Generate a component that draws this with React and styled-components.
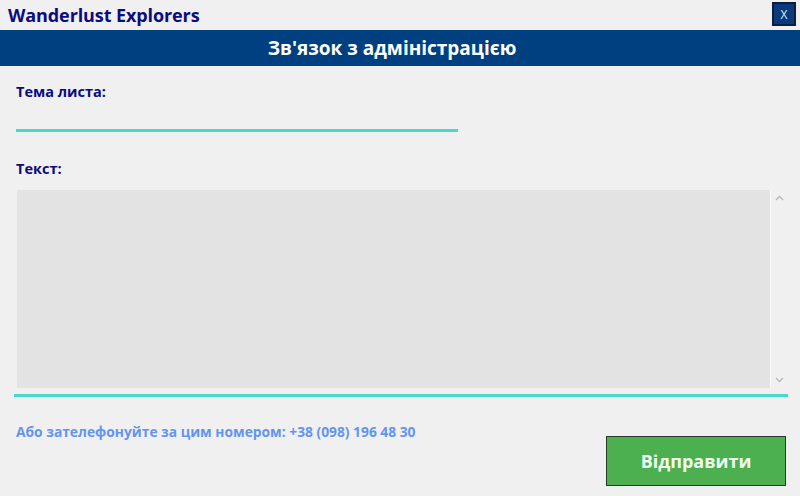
import React from "react";
import styled, { createGlobalStyle } from "styled-components";

const Global = createGlobalStyle`
  html, body { margin: 0; padding: 0; background: #f0f0f0; }
  body { font-family: "Open Sans", "Noto Sans", sans-serif; }
  * { box-sizing: border-box; }
`;

const Window = styled.div`
  width: 800px;
  height: 496px;
  background: #f0f0f0;
  display: flex;
  flex-direction: column;
  overflow: hidden;
`;

const TitleBar = styled.div`
  height: 30px;
  display: flex;
  align-items: flex-start;
  justify-content: space-between;
  padding: 2px 4px 0 8px;
`;

const AppTitle = styled.div`
  font-size: 18px;
  font-weight: 700;
  color: #0b0b80;
  line-height: 26px;
  letter-spacing: -0.1px;
`;

const CloseButton = styled.button`
  width: 24px;
  height: 24px;
  background: #0a3a7c;
  border: 2px solid #0c1e3a;
  color: #dfe8f5;
  font-family: "Open Sans", sans-serif;
  font-size: 12px;
  padding: 0;
  display: flex;
  align-items: center;
  justify-content: center;
`;

const Header = styled.div`
  height: 36px;
  background: #003f80;
  color: #ffffff;
  font-size: 19px;
  font-weight: 700;
  display: flex;
  align-items: center;
  justify-content: center;
  padding-right: 16px;
`;

const Form = styled.div`
  display: flex;
  flex-direction: column;
  padding: 0 12px 0 16px;
  flex: 1;
`;

const Label = styled.div`
  font-size: 14.5px;
  font-weight: 700;
  color: #0b0b80;
  line-height: 20px;
  margin-top: ${(p) => p.$top}px;
`;

const SubjectInput = styled.div`
  width: 442px;
  height: 3px;
  background: #4ad8ca;
  margin-top: ${(p) => p.$top}px;
`;

const TextBox = styled.div`
  margin-top: 11px;
  margin-left: 1px;
  height: 198px;
  display: flex;
`;

const TextArea = styled.div`
  flex: 0 0 753px;
  background: #e3e3e3;
`;

const ScrollBar = styled.div`
  width: 17px;
  border-left: 1px solid #fafafa;
  display: flex;
  flex-direction: column;
  justify-content: space-between;
  align-items: center;
  padding: 5px 0 5px;
`;

const Arrow = styled.svg`
  width: 9px;
  height: 6px;
`;

const BottomLine = styled.div`
  height: 3px;
  margin-top: 6px;
  margin-left: -2px;
  width: 774px;
  background: #4ad8ca;
`;

const Footer = styled.div`
  display: flex;
  justify-content: space-between;
  align-items: flex-start;
  margin-top: 25px;
`;

const Phone = styled.div`
  font-size: 13.8px;
  font-weight: 700;
  color: #6495ed;
  line-height: 20px;
`;

const SendButton = styled.button`
  width: 180px;
  height: 50px;
  margin-top: 14px;
  margin-right: 2px;
  background: #4caf50;
  border: 1px solid #2a3a2a;
  color: #f0fff0;
  font-family: "Open Sans", sans-serif;
  font-size: 18px;
  font-weight: 700;
`;

export default function App() {
  return (
    <Window>
      <Global />
      <TitleBar>
        <AppTitle>Wanderlust Explorers</AppTitle>
        <CloseButton>X</CloseButton>
      </TitleBar>
      <Header>Зв'язок з адміністрацією</Header>
      <Form>
        <Label $top={16}>Тема листа:</Label>
        <SubjectInput $top={27} />
        <Label $top={27}>Текст:</Label>
        <TextBox>
          <TextArea />
          <ScrollBar>
            <Arrow viewBox="0 0 9 6">
              <path d="M1 5 L4.5 1.5 L8 5" stroke="#b8b8b8" strokeWidth="1.4" fill="none" />
            </Arrow>
            <Arrow viewBox="0 0 9 6">
              <path d="M1 1 L4.5 4.5 L8 1" stroke="#b8b8b8" strokeWidth="1.4" fill="none" />
            </Arrow>
          </ScrollBar>
        </TextBox>
        <BottomLine />
        <Footer>
          <Phone>Або зателефонуйте за цим номером: +38 (098) 196 48 30</Phone>
          <SendButton>Відправити</SendButton>
        </Footer>
      </Form>
    </Window>
  );
}
